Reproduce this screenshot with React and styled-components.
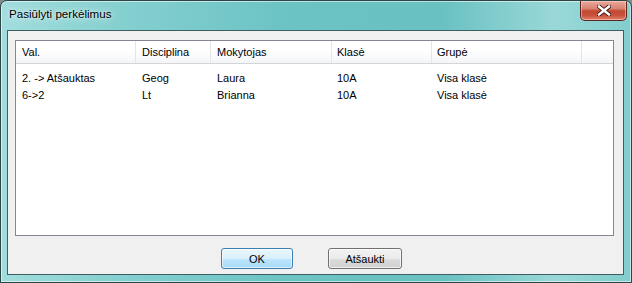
import React from 'react'
import styled, { createGlobalStyle } from 'styled-components'

const GlobalStyle = createGlobalStyle`
  html, body {
    margin: 0;
    padding: 0;
    background: #7d8c8c;
  }
  * { box-sizing: border-box; }
`;

const Window = styled.div`
  width: 632px;
  height: 283px;
  display: flex;
  flex-direction: column;
  border: 1px solid #2e4546;
  border-radius: 7px 7px 0 0;
  background: linear-gradient(90deg, #a2dddd 0%, #86d0d0 18%, #6cc3c4 45%, #6ac1c2 70%, #9ad8d8 88%, #82cdcd 100%);
  box-shadow: inset 0 0 0 1px rgba(255, 255, 255, 0.55);
  padding: 0 7px 7px 6px;
  font-family: "Liberation Sans", Arial, sans-serif;
  overflow: hidden;
`;

const TitleBar = styled.div`
  height: 29px;
  display: flex;
  align-items: flex-start;
  justify-content: space-between;
  margin: 0 -1px 0 0;
`;

const Title = styled.div`
  padding: 6px 0 0 2px;
  font-size: 11.6px;
  color: #000;
  text-shadow: 0 0 8px rgba(255, 255, 255, 0.9), 0 0 3px rgba(255, 255, 255, 0.8);
`;

const CloseButton = styled.div`
  width: 47px;
  height: 20px;
  margin-right: -2px;
  display: flex;
  align-items: center;
  justify-content: center;
  border: 1px solid #5c2620;
  border-top: none;
  border-radius: 0 0 5px 5px;
  background: linear-gradient(180deg, #e9a99c 0%, #d98372 40%, #c24a33 52%, #c9503a 75%, #e0806a 100%);
  box-shadow: inset 0 0 0 1px rgba(255, 220, 210, 0.5);
`;

const Client = styled.div`
  flex: 1;
  display: flex;
  flex-direction: column;
  background: #f0f0f0;
  border: 1px solid #3f5e61;
  padding: 9px 9px 5px 7px;
`;

const ListView = styled.div`
  flex: 1;
  background: #fff;
  border: 1px solid #828790;
  font-size: 11px;
  color: #000;
`;

const Header = styled.div`
  display: flex;
  height: 23px;
  background: linear-gradient(180deg, #ffffff 0%, #ffffff 40%, #f4f5f7 100%);
  border-bottom: 1px solid #d5d5d5;
`;

const HeaderCell = styled.div`
  width: ${p => p.$w ? `${p.$w}px` : 'auto'};
  flex: ${p => p.$w ? 'none' : 1};
  padding: 5px 0 0 ${p => p.$pad || 6}px;
  border-right: ${p => p.$last ? 'none' : '1px solid #e3e5e8'};
  white-space: nowrap;
`;

const Rows = styled.div`
  padding-top: 5px;
`;

const Row = styled.div`
  display: flex;
  height: 17px;
  align-items: center;
`;

const Cell = styled.div`
  width: ${p => p.$w}px;
  flex: none;
  padding-left: ${p => p.$pad || 6}px;
  white-space: nowrap;
`;

const Footer = styled.div`
  display: flex;
  justify-content: center;
  gap: 35px;
  padding: 12px 0 0 0;
  margin-right: 6px;
`;

const Button = styled.div`
  width: ${p => p.$w}px;
  height: 21px;
  display: flex;
  align-items: center;
  justify-content: center;
  font-size: 11px;
  color: #000;
  border-radius: 3px;
  border: 1px solid ${p => p.$default ? '#3c7fb1' : '#707070'};
  background: ${p => p.$default
    ? 'linear-gradient(180deg, #eaf6fd 0%, #d9f0fc 50%, #bee6fd 51%, #a7d9f5 100%)'
    : 'linear-gradient(180deg, #f2f2f2 0%, #ebebeb 50%, #dddddd 51%, #cfcfcf 100%)'};
  box-shadow: inset 0 0 0 1px ${p => p.$default ? 'rgba(255,255,255,0.6)' : 'rgba(255,255,255,0.7)'};
`;

const columns = [
  { key: 'val', label: 'Val.', w: 120 },
  { key: 'disc', label: 'Disciplina', w: 75 },
  { key: 'teacher', label: 'Mokytojas', w: 121 },
  { key: 'cls', label: 'Klasė', w: 100, pad: 5 },
  { key: 'group', label: 'Grupė', w: 150, pad: 5 },
];

const rows = [
  { val: '2. -> Atšauktas', disc: 'Geog', teacher: 'Laura', cls: '10A', group: 'Visa klasė' },
  { val: '6->2', disc: 'Lt', teacher: 'Brianna', cls: '10A', group: 'Visa klasė' },
];

const CloseIcon = () => (
  <svg width="14" height="11" viewBox="0 0 14 11">
    <path d="M2 1.5 L12 9.5 M12 1.5 L2 9.5" stroke="#3a1510" strokeWidth="4.2" strokeLinecap="square" />
    <path d="M2 1.5 L12 9.5 M12 1.5 L2 9.5" stroke="#fff" strokeWidth="2.4" strokeLinecap="square" />
  </svg>
);

export default function App() {
  return (
    <>
      <GlobalStyle />
      <Window>
        <TitleBar>
          <Title>Pasiūlyti perkėlimus</Title>
          <CloseButton><CloseIcon /></CloseButton>
        </TitleBar>
        <Client>
          <ListView>
            <Header>
              {columns.map(c => (
                <HeaderCell key={c.key} $w={c.w} $pad={c.pad}>{c.label}</HeaderCell>
              ))}
              <HeaderCell $last />
            </Header>
            <Rows>
              {rows.map((r, i) => (
                <Row key={i}>
                  {columns.map(c => (
                    <Cell key={c.key} $w={c.w} $pad={c.pad}>{r[c.key]}</Cell>
                  ))}
                </Row>
              ))}
            </Rows>
          </ListView>
          <Footer>
            <Button $w={72} $default>OK</Button>
            <Button $w={74}>Atšaukti</Button>
          </Footer>
        </Client>
      </Window>
    </>
  )
}
